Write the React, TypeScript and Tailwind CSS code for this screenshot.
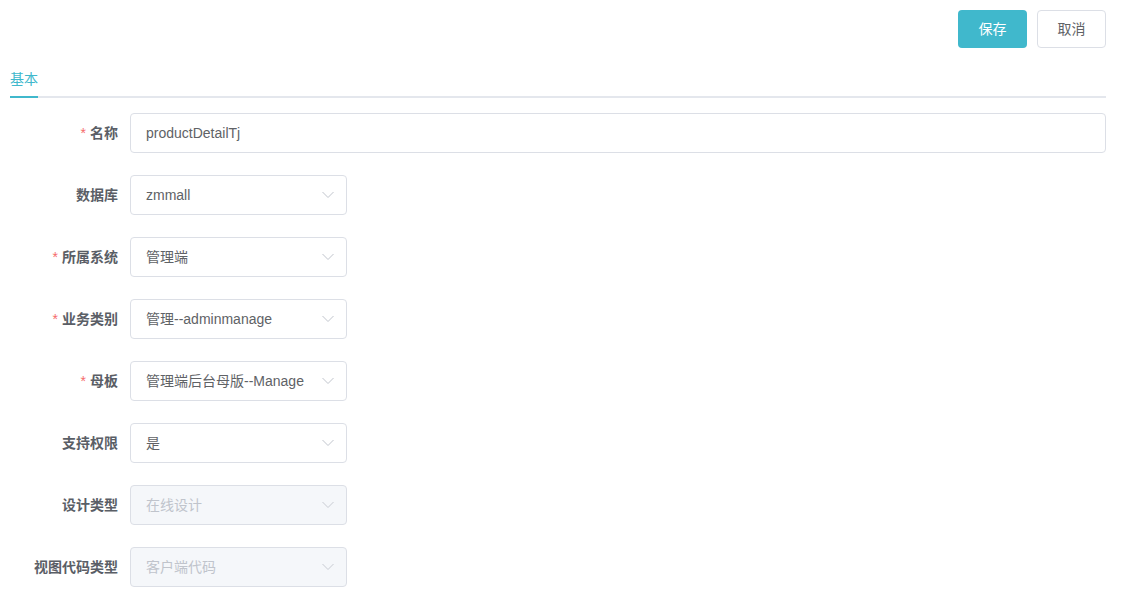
import React from "react";

const font = { fontFamily: '"Liberation Sans", "Noto Sans CJK SC", sans-serif' };

function Chevron({ light }: { light?: boolean }) {
  return (
    <svg width="12" height="7" viewBox="0 0 12 7" className="absolute right-[12px] top-1/2 -translate-y-1/2">
      <path d="M0.5 0.5 L6 6 L11.5 0.5" fill="none" stroke={light ? "#c8cbd2" : "#c0c4cc"} strokeWidth="1" />
    </svg>
  );
}

function Row({ label, required, children }: { label: string; required?: boolean; children: React.ReactNode }) {
  return (
    <div className="flex items-center h-[40px]">
      <div className="w-[120px] pr-[12px] text-right text-[14px] font-bold text-[#5a5e66] leading-none shrink-0">
        {required && <span className="text-[#f56c6c] mr-[4px] font-normal">*</span>}
        {label}
      </div>
      {children}
    </div>
  );
}

function Select({ value, disabled }: { value: string; disabled?: boolean }) {
  return (
    <div
      className={`relative w-[217px] h-[40px] rounded-[4px] border border-[#dcdfe6] flex items-center pl-[15px] text-[14px] ${
        disabled ? "bg-[#f5f7fa] text-[#c0c4cc]" : "bg-white text-[#606266]"
      }`}
    >
      {value}
      <Chevron light={disabled} />
    </div>
  );
}

export default function App() {
  return (
    <div className="w-[1124px] h-[589px] bg-white overflow-hidden pl-[10px] pr-[18px] pt-[10px]" style={font}>
      <div className="flex justify-end gap-[10px]">
        <button className="w-[69px] h-[38px] rounded-[4px] bg-[#40b8cc] text-white text-[14px]">保存</button>
        <button className="w-[69px] h-[38px] rounded-[4px] bg-white border border-[#dcdfe6] text-[#606266] text-[14px]">取消</button>
      </div>
      <div className="mt-[18px] border-b-2 border-[#e4e7ed] flex">
        <div className="text-[14px] text-[#40b8cc] pt-[2px] pb-[6px] -mb-[2px] border-b-2 border-[#40b8cc] leading-[22px]">基本</div>
      </div>
      <div className="mt-[15px] flex flex-col gap-[22px]">
        <Row label="名称" required>
          <div className="flex-1 h-[40px] rounded-[4px] border border-[#dcdfe6] flex items-center pl-[15px] text-[14px] text-[#606266]">
            productDetailTj
          </div>
        </Row>
        <Row label="数据库">
          <Select value="zmmall" />
        </Row>
        <Row label="所属系统" required>
          <Select value="管理端" />
        </Row>
        <Row label="业务类别" required>
          <Select value="管理--adminmanage" />
        </Row>
        <Row label="母板" required>
          <Select value="管理端后台母版--Manage" />
        </Row>
        <Row label="支持权限">
          <Select value="是" />
        </Row>
        <Row label="设计类型">
          <Select value="在线设计" disabled />
        </Row>
        <Row label="视图代码类型">
          <Select value="客户端代码" disabled />
        </Row>
      </div>
    </div>
  );
}
